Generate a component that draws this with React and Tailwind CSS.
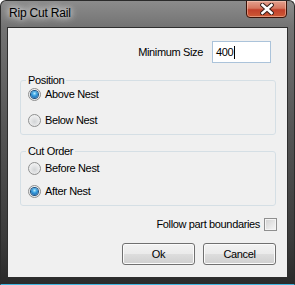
import React from "react";

function Radio({ checked, label }) {
  return (
    <label className="flex h-[14px] items-center gap-[4px]">
      <span className="flex h-[13px] w-[13px] items-center justify-center rounded-full border border-[#8e8f8f] bg-[radial-gradient(circle_at_50%_60%,#d2d4d6_0%,#e6e7e8_45%,#fbfbfb_100%)]">
        {checked && (
          <span className="h-[7px] w-[7px] rounded-full bg-[radial-gradient(circle_at_50%_35%,#b8ecff_0%,#3aa0e0_40%,#0d4f99_100%)] shadow-[0_0_0_1px_#1c5180]" />
        )}
      </span>
      <span>{label}</span>
    </label>
  );
}

function Group({ title, children, className }) {
  return (
    <fieldset className={`rounded-[3px] border border-[#d5dfe5] pl-[5px] pr-[5px] pb-[7px] ${className}`}>
      <legend className="px-[2px] leading-[13px]">{title}</legend>
      <div className="ml-[2px] flex flex-col">{children}</div>
    </fieldset>
  );
}

function WinButton({ children }) {
  return (
    <button className="h-[22px] w-[73px] rounded-[3px] border border-[#707070] bg-[linear-gradient(#f2f2f2_0%,#ebebeb_48%,#dddddd_52%,#cfcfcf_100%)] shadow-[inset_0_0_0_1px_#fbfbfb] leading-none text-black">
      {children}
    </button>
  );
}

export default function App() {
  return (
    <div className="flex h-[285px] w-[295px] flex-col overflow-hidden rounded-t-[6px] border border-[#2b2b2b] border-b-[#3fb4de] bg-[linear-gradient(to_bottom,#8c8c8c_0px,#737373_26px,#555555_45%,#3a3a3a_85%,#2a2a2a_100%)] font-['Liberation_Sans',Arial,sans-serif] text-[11px] tracking-[-0.35px] text-black">
      {/* title bar */}
      <div className="flex h-[26px] shrink-0 items-start justify-between">
        <div className="ml-[8px] mt-[5px] text-[12px] leading-[15px] tracking-[-0.2px] [text-shadow:0_0_6px_#fff,0_0_10px_#fff]">
          Rip Cut Rail
        </div>
        <div className="-mt-px mr-[7px] flex h-[18px] w-[41px] items-center justify-center rounded-b-[4px] border border-[#3b1207] bg-[linear-gradient(#e3a08f_0%,#d6775f_45%,#c2402a_55%,#cd5a36_100%)] shadow-[inset_0_0_0_1px_rgba(255,220,200,0.45)]">
          <svg width="14" height="12" viewBox="0 0 14 12">
            <path d="M2.5 2 L11.5 10 M11.5 2 L2.5 10" stroke="#3a1f1a" strokeWidth="4.6" strokeLinecap="square" />
            <path d="M2.5 2 L11.5 10 M11.5 2 L2.5 10" stroke="#ffffff" strokeWidth="2.6" strokeLinecap="square" />
          </svg>
        </div>
      </div>

      {/* client area */}
      <div className="ml-[6px] h-[251px] w-[281px] shrink-0 border border-[#2e2e2e] bg-[#f0f0f0]">
        <div className="flex flex-col pl-[12px] pr-[11px]">
          <div className="mt-[13px] flex items-center justify-end gap-[9px] pr-[5px]">
            <span>Minimum Size</span>
            <div className="flex h-[22px] w-[59px] items-center border border-[#abc3da] bg-white pl-[3px]">
              <span>400</span>
              <span className="ml-[1px] h-[13px] w-px bg-black" />
            </div>
          </div>

          <Group title="Position" className="mt-[11px]">
            <Radio checked label="Above Nest" />
            <div className="mt-[12px]">
              <Radio label="Below Nest" />
            </div>
          </Group>

          <Group title="Cut Order" className="mt-[10px]">
            <div className="mt-[3px]">
              <Radio label="Before Nest" />
            </div>
            <div className="mt-[9px]">
              <Radio checked label="After Nest" />
            </div>
          </Group>

          <div className="mr-[-1px] mt-[12px] flex h-[13px] items-center justify-end gap-[4px]">
            <span>Follow part boundaries</span>
            <span className="h-[13px] w-[13px] border border-[#8f8f8f] bg-[linear-gradient(135deg,#d0d0d0_0%,#e8e8e8_60%,#f6f6f6_100%)] shadow-[inset_0_0_0_1px_#f4f4f4]" />
          </div>

          <div className="mt-[12px] flex justify-end gap-[8px]">
            <WinButton>Ok</WinButton>
            <WinButton>Cancel</WinButton>
          </div>
        </div>
      </div>
    </div>
  );
}
